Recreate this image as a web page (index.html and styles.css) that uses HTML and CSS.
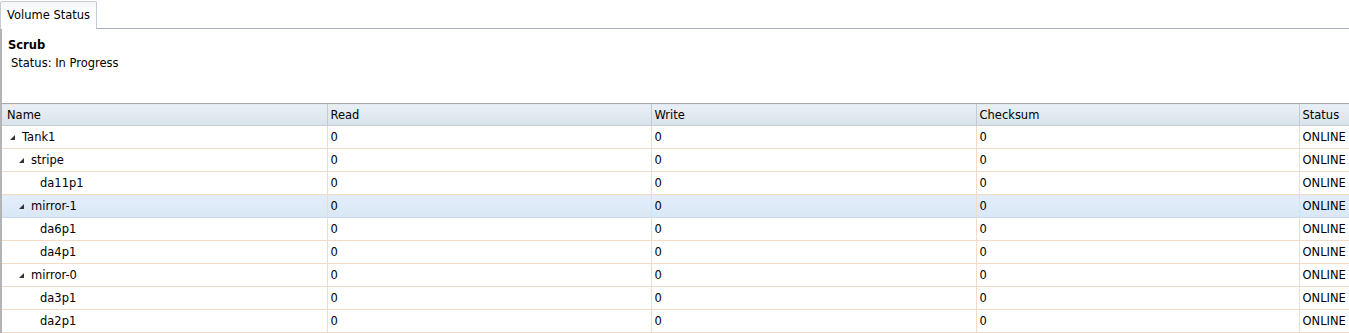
FILE: index.html
```html
<!DOCTYPE html>
<html lang="en">
<head>
    <meta charset="UTF-8">
    <title>Volume Status</title>
    <link rel="stylesheet" href="styles.css">
</head>
<body>

<div class="tabs">
    <div class="tab">Volume Status</div>
</div>

<div class="panel">
    <div class="scrub">
        <div class="scrub-title">Scrub</div>
        <div class="scrub-status">Status: In Progress</div>
    </div>

    <table class="grid">
        <colgroup>
            <col class="c-name">
            <col class="c-read">
            <col class="c-write">
            <col class="c-sum">
            <col class="c-status">
        </colgroup>
        <thead>
            <tr>
                <th>Name</th>
                <th>Read</th>
                <th>Write</th>
                <th>Checksum</th>
                <th>Status</th>
            </tr>
        </thead>
        <tbody>
            <tr>
                <td class="lvl0"><span class="arrow"></span>Tank1</td>
                <td>0</td><td>0</td><td>0</td><td>ONLINE</td>
            </tr>
            <tr>
                <td class="lvl1"><span class="arrow"></span>stripe</td>
                <td>0</td><td>0</td><td>0</td><td>ONLINE</td>
            </tr>
            <tr>
                <td class="lvl2">da11p1</td>
                <td>0</td><td>0</td><td>0</td><td>ONLINE</td>
            </tr>
            <tr class="selected">
                <td class="lvl1"><span class="arrow"></span>mirror-1</td>
                <td>0</td><td>0</td><td>0</td><td>ONLINE</td>
            </tr>
            <tr>
                <td class="lvl2">da6p1</td>
                <td>0</td><td>0</td><td>0</td><td>ONLINE</td>
            </tr>
            <tr>
                <td class="lvl2">da4p1</td>
                <td>0</td><td>0</td><td>0</td><td>ONLINE</td>
            </tr>
            <tr>
                <td class="lvl1"><span class="arrow"></span>mirror-0</td>
                <td>0</td><td>0</td><td>0</td><td>ONLINE</td>
            </tr>
            <tr>
                <td class="lvl2">da3p1</td>
                <td>0</td><td>0</td><td>0</td><td>ONLINE</td>
            </tr>
            <tr>
                <td class="lvl2">da2p1</td>
                <td>0</td><td>0</td><td>0</td><td>ONLINE</td>
            </tr>
        </tbody>
    </table>
</div>

</body>
</html>
```

FILE: styles.css
```css
body {
    margin: 0;
    font-family: "DejaVu Sans", Verdana, sans-serif;
    font-size: 11.5px;
    color: #000;
    background: #fff;
    overflow: hidden;
}
.tabs {
    height: 28px;
    border-bottom: 1px solid #a9aec2;
    display: flex;
    align-items: flex-end;
}
.tab {
    height: 27px;
    line-height: 27px;
    padding: 0 6px 0 6px;
    width: 83px;
    border: 1px solid #c6ccd6;
    border-bottom: none;
    border-radius: 2px 2px 0 0;
    background: linear-gradient(#f3f6fa, #ffffff 40%);
    margin-bottom: -1px;
    white-space: nowrap;
}
.panel {
    border-left: 2px solid #b4b4b4;
    min-height: 305px;
}
.scrub {
    height: 74px;
    padding: 9px 0 0 6px;
    box-sizing: border-box;
}
.scrub-title {
    font-weight: bold;
    line-height: 14px;
}
.scrub-status {
    margin-top: 4px;
    padding-left: 3px;
    line-height: 14px;
}
.grid {
    border-collapse: collapse;
    table-layout: fixed;
    width: 1360px;
}
.c-name { width: 325px; }
.c-read { width: 324px; }
.c-write { width: 325px; }
.c-sum { width: 323px; }
.c-status { width: 63px; }
.grid th {
    height: 20px;
    padding: 1px 0 0 3px;
    text-align: left;
    font-weight: normal;
    background: linear-gradient(#e9eff5, #d9e3ec);
    border-top: 1px solid #a7a7a7;
    border-bottom: 1px solid #c5cbd2;
    border-left: 1px solid #c3cad3;
    white-space: nowrap;
}
.grid th:first-child {
    border-left: none;
    padding-left: 5px;
}
.grid td {
    height: 22px;
    padding: 0 0 0 3px;
    border-bottom: 1px solid #f3dcc7;
    border-left: 1px solid #f3dcc7;
    white-space: nowrap;
}
.grid td:first-child {
    border-left: none;
}
.grid .selected td {
    background: linear-gradient(#e4eefa, #d8e7f6);
    border-bottom-color: #cddcec;
}
.lvl0 { padding-left: 8px !important; }
.lvl1 { padding-left: 17px !important; }
.lvl2 { padding-left: 38px !important; }
.arrow {
    display: inline-block;
    width: 0;
    height: 0;
    border-right: 5px solid #333;
    border-top: 5px solid transparent;
    margin-right: 7px;
    vertical-align: 1px;
}
```
